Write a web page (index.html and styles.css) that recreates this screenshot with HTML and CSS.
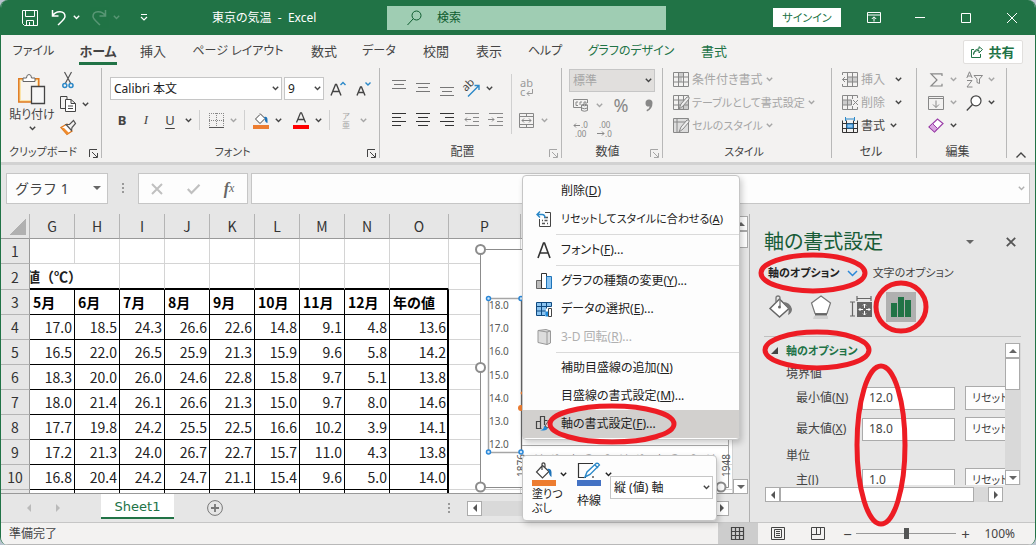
FILE: index.html
```
<!DOCTYPE html>
<html lang="ja">
<head>
<meta charset="utf-8">
<title>東京の気温 - Excel</title>
<link rel="stylesheet" href="styles.css">
</head>
<body>
<svg class="defs" aria-hidden="true">
  <symbol id="chev" viewBox="0 0 7 5"><path d="M.8 .8 3.500 3.500 6.200 .8" fill="none" stroke="currentColor" stroke-width="1.400"/></symbol>
  <symbol id="launch" viewBox="0 0 9 9"><path d="M.5 8V.5H8M3 3l5 5M8.500 4v4.500H4" fill="none" stroke="currentColor"/></symbol>
  <symbol id="grid" viewBox="0 0 16 16"><path d="M.5 .5h15v14H.5zM.5 5h15M.5 10h15M5.500 .5v14M10.500 .5v14" fill="none" stroke="currentColor"/></symbol>
  <symbol id="bucket" viewBox="0 0 20 17"><path d="M8 4 2.500 10l6 6 6.500-6.500L8 3M8 8V2.500Q8 .8 9.500 .8T11 3v3" fill="#fff" stroke="#444" stroke-width="1.200"/><path d="M13 7q4-1 4.500 3v5q-3-2-2.500-6z" fill="#1e73b8"/></symbol>
</svg>

<div class="window">
<header class="titlebar">
  <div class="quick">
    <button aria-label="上書き保存"><svg width="16" height="16" viewBox="0 0 16 16"><path d="M.5 .5h15v15h-13l-2-2zM3.500 .5v6h9v-6M4.500 15.500v-5h7v5M7.500 12v3" fill="none" stroke="#fff"/></svg></button>
    <button aria-label="元に戻す"><svg width="16" height="17" viewBox="0 0 16 17"><path d="M1.500 1v6h6M1.500 7C5 1 14 1.500 14 7.500 14 10 10 13 7 16" fill="none" stroke="#fff" stroke-width="1.500"/></svg></button>
    <button class="drop" aria-label="元に戻すの一覧"><svg class="chev"><use href="#chev"/></svg></button>
    <button class="faded" aria-label="やり直し"><svg width="16" height="17" viewBox="0 0 16 17"><path d="M14.500 1v6h-6M14.500 7C11 1 2 1.500 2 7.500 2 10 6 13 9 16" fill="none" stroke="#fff" stroke-width="1.500"/></svg></button>
    <button class="drop faded" aria-label="やり直しの一覧"><svg class="chev"><use href="#chev"/></svg></button>
    <button class="drop custom" aria-label="カスタマイズ"><svg width="8" height="8" viewBox="0 0 8 8"><path d="M1 .5h6M1 3l3 3 3-3" fill="none" stroke="#fff" stroke-width="1.200"/></svg></button>
  </div>
  <h1>東京の気温 &nbsp;-&nbsp; Excel</h1>
  <label class="search"><svg width="16" height="16" viewBox="0 0 16 16"><circle cx="9.500" cy="5.500" r="4.500" fill="none" stroke="#0e5c2f"/><path d="M6.300 8.700 .5 15" stroke="#0e5c2f"/></svg><input type="text" placeholder="検索" aria-label="検索"></label>
  <div class="wincontrols">
    <button class="signin">サインイン</button>
    <button aria-label="リボンの表示オプション"><svg width="14" height="11" viewBox="0 0 14 11"><path d="M.5 .5h13v10H.5zM.5 3h13M7 9.500V5M4.800 7 7 4.800 9.200 7" fill="none" stroke="#fff"/></svg></button>
    <button aria-label="最小化"><svg width="10" height="10" viewBox="0 0 10 10"><path d="M0 4.500h10" stroke="#fff"/></svg></button>
    <button aria-label="最大化"><svg width="10" height="10" viewBox="0 0 10 10"><path d="M.5 .5h9v9h-9z" fill="none" stroke="#fff"/></svg></button>
    <button aria-label="閉じる"><svg width="10" height="10" viewBox="0 0 10 10"><path d="M0 0l10 10M10 0 0 10" stroke="#fff"/></svg></button>
  </div>
</header>

<nav class="tabs">
  <a href="#" class="kana">ファイル</a><a href="#" class="active">ホーム</a><a href="#">挿入</a><a href="#" class="kana">ページ レイアウト</a><a href="#">数式</a><a href="#" class="kana">データ</a><a href="#">校閲</a><a href="#">表示</a><a href="#" class="kana">ヘルプ</a><a href="#" class="tool kana">グラフのデザイン</a><a href="#" class="tool">書式</a>
  <button class="share"><svg width="12" height="12" viewBox="0 0 12 12"><path d="M3 3.500H.5v8h9V8M2.500 8.500Q3 4.500 8 4.500V7l3.500-3.500L8 .7V3Q3 3 2.500 8.500" fill="none" stroke="#217346"/></svg>共有</button>
</nav>

<section class="ribbon">
  <div class="group">
    <div class="clip">
      <button class="paste">
        <svg width="28" height="30" viewBox="0 0 28 30"><path d="M.8 4.800h20V28H.8z" fill="#fbe3a8" stroke="#e07a1f" stroke-width="1.500"/><path d="M3 7h16v19H3z" fill="#f8f5f0"/><path d="M5 7.500V4h3.500q0-3.500 2.500-3.500T13.500 4H17v3.500z" fill="#fff" stroke="#666"/><path d="M13.500 12.500h13v17h-13z" fill="#f6f6f6" stroke="#444" stroke-width="1.300"/></svg>
        <span>貼り付け</span>
        <svg class="chev"><use href="#chev"/></svg>
      </button>
      <div class="clipcol">
        <div class="row"><button aria-label="切り取り"><svg width="12" height="17" viewBox="0 0 12 17"><path d="M2.500 0 8.500 11M9.500 0 3.500 11" stroke="#555" stroke-width="1.200"/><circle cx="2.800" cy="13.500" r="2" fill="none" stroke="#2b88c8" stroke-width="1.500"/><circle cx="9" cy="13.500" r="2" fill="none" stroke="#2b88c8" stroke-width="1.500"/></svg></button></div>
        <div class="row"><button aria-label="コピー"><svg width="16" height="16" viewBox="0 0 16 16"><path d="M5 12.500H.5V.5H7V3" fill="none" stroke="#444"/><path d="M5.500 3.500H11l4.500 4v8h-10zM11 3.500v4h4.500M8 10h5M8 12.500h5" fill="#fff" stroke="#444"/></svg></button><button class="drop" aria-label="コピーの一覧"><svg class="chev"><use href="#chev"/></svg></button></div>
        <div class="row"><button aria-label="書式のコピー"><svg width="16" height="16" viewBox="0 0 16 16"><path d="M1 7.500 7 14.500l5-3.500L7 4z" fill="#fff" stroke="#e07a1f" stroke-width="1.300"/><path d="M1 7.500 7 14.500l2-1.500-5-5z" fill="#f08c2e"/><path d="M6 4.500 11.500 10.500 12 7.500l3.500-4-2-3L9.500 4.500z" fill="#f3f2f1" stroke="#555" stroke-width="1.200"/></svg></button></div>
      </div>
    </div>
    <footer class="kana">クリップボード<button class="launch" aria-label="クリップボードの設定"><svg><use href="#launch"/></svg></button></footer>
  </div>

  <div class="group font">
    <div class="row fontpick">
      <select class="face" aria-label="フォント"><option>Calibri 本文</option></select>
      <select class="size" aria-label="フォント サイズ"><option>9</option></select>
      <button class="grow" aria-label="拡大"><svg width="16" height="16" viewBox="0 0 16 16"><path d="M1 14.500 5.500 3.500h1L11 14.500M2.800 10.500h6.500" fill="none" stroke="#444" stroke-width="1.400"/><path d="M10.500 4 13 1.500 15.500 4" fill="none" stroke="#2b88c8" stroke-width="1.400"/></svg></button>
      <button class="grow" aria-label="縮小"><svg width="16" height="16" viewBox="0 0 16 16"><path d="M2 14.500 5.500 6h1L10 14.500M3.500 11.500h5" fill="none" stroke="#444" stroke-width="1.400"/><path d="M10.500 1.500 13 4l2.500-2.500" fill="none" stroke="#2b88c8" stroke-width="1.400"/></svg></button>
    </div>
    <div class="row fontstyle">
      <button class="bold">B</button><button class="italic">I</button><button class="under">U</button><button class="drop" aria-label="下線の一覧"><svg class="chev"><use href="#chev"/></svg></button>
      <i class="sep"></i>
      <button class="off" aria-label="罫線"><svg width="15" height="15" viewBox="0 0 15 15"><path d="M.5 0v14M7.500 0v14M14.500 0v14M0 .5h15M0 7.500h15" fill="none" stroke="#888" stroke-dasharray="1 1"/><path d="M0 14.500h15" stroke="#555"/></svg></button><button class="drop off" aria-label="罫線の一覧"><svg class="chev"><use href="#chev"/></svg></button>
      <i class="sep"></i>
      <button aria-label="塗りつぶしの色"><svg width="16" height="17" viewBox="0 0 16 17"><path d="M7 2.500 2.500 7 7 11.500l5-5L7 1.500" fill="#fff" stroke="#444"/><path d="M11 5q3.500-1 3.500 3v3q-3-1-2.500-4z" fill="#1e73b8"/><path d="M0 13h16v4H0z" fill="#ed7d31"/></svg></button><button class="drop" aria-label="塗りつぶしの一覧"><svg class="chev"><use href="#chev"/></svg></button>
      <button class="fontcolor" aria-label="フォントの色"><svg width="16" height="17" viewBox="0 0 16 17"><path d="M3.500 10.500 7.500 .8h1l4 9.700M5 7.500h6" fill="none" stroke="#444" stroke-width="1.300"/><path d="M0 13h16v4H0z" fill="#f00"/></svg></button><button class="drop" aria-label="フォントの色の一覧"><svg class="chev"><use href="#chev"/></svg></button>
      <i class="sep"></i>
      <button class="ruby off"><span>ア</span><span>亜</span></button><button class="drop off" aria-label="ふりがなの一覧"><svg class="chev"><use href="#chev"/></svg></button>
    </div>
    <footer class="kana">フォント<button class="launch" aria-label="フォントの設定"><svg><use href="#launch"/></svg></button></footer>
  </div>

  <div class="group align">
    <div class="alignbody">
      <div class="alignleft">
        <div class="row">
          <button class="off" aria-label="上揃え"><svg width="14" height="18" viewBox="0 0 14 18"><path d="M0 1.500h14M2 5.500h10M0 9.500h14" stroke="#777"/></svg></button>
          <button class="off" aria-label="上下中央揃え"><svg width="14" height="18" viewBox="0 0 14 18"><path d="M0 4.500h14M2 8.500h10M0 12.500h14" stroke="#777"/></svg></button>
          <button class="off" aria-label="下揃え"><svg width="14" height="18" viewBox="0 0 14 18"><path d="M0 8.500h14M2 12.500h10M0 16.500h14" stroke="#777"/></svg></button>
          <button aria-label="方向"><svg width="17" height="17" viewBox="0 0 17 17"><text transform="translate(3 12) rotate(-45)" font-size="11" fill="#444">ab</text><path d="M5 16.500 16 5.500M11.500 5.500h4.500v4.500" fill="none" stroke="#2b88c8" stroke-width="1.400"/></svg></button><button class="drop" aria-label="方向の一覧"><svg class="chev"><use href="#chev"/></svg></button>
        </div>
        <div class="row">
          <button aria-label="左揃え"><svg width="14" height="14" viewBox="0 0 14 14"><path d="M0 .5h14M0 4.500h9M0 8.500h14M0 12.500h9" stroke="#333"/></svg></button>
          <button aria-label="中央揃え"><svg width="14" height="14" viewBox="0 0 14 14"><path d="M0 .5h14M2 4.500h10M0 8.500h14M2 12.500h10" stroke="#333"/></svg></button>
          <button aria-label="右揃え"><svg width="14" height="14" viewBox="0 0 14 14"><path d="M0 .5h14M5 4.500h9M0 8.500h14M5 12.500h9" stroke="#333"/></svg></button>
          <button class="off" aria-label="インデントを減らす"><svg width="15" height="14" viewBox="0 0 15 14"><path d="M1 .5h14M9 4.500h6M9 8.500h6M1 12.500h14M7 6.500H1M3 4.500l-2 2 2 2" fill="none" stroke="#888"/></svg></button>
          <button class="off" aria-label="インデントを増やす"><svg width="15" height="14" viewBox="0 0 15 14"><path d="M1 .5h14M9 4.500h6M9 8.500h6M1 12.500h14M0 6.500h6M4 4.500l2 2-2 2" fill="none" stroke="#888"/></svg></button>
        </div>
      </div>
      <i class="sep"></i>
      <div class="alignright">
        <div class="row"><button class="off" aria-label="折り返して全体を表示する"><svg width="14" height="18" viewBox="0 0 14 18"><text x="1" y="8" font-size="11" fill="#999">ab</text><text x="1" y="17" font-size="11" fill="#999">c</text><path d="M13.500 10v4.500H8M10.500 12 8 14.500l2.500 2.500" fill="none" stroke="#999"/></svg></button></div>
        <div class="row"><button class="off" aria-label="セルを結合して中央揃え"><svg width="15" height="15" viewBox="0 0 15 15"><path d="M.5 .5h14v14H.5zM.5 3.500h14M.5 11.500h14M7.500 .5v3M7.500 11.500v3M3 7.500h9M5 5.500l-2 2 2 2M10 5.500l2 2-2 2" fill="none" stroke="#888"/></svg></button><button class="drop off" aria-label="結合の一覧"><svg class="chev"><use href="#chev"/></svg></button></div>
      </div>
    </div>
    <footer>配置<button class="launch off" aria-label="配置の設定"><svg><use href="#launch"/></svg></button></footer>
  </div>

  <div class="group number">
    <select class="format" aria-label="表示形式" disabled><option>標準</option></select>
    <div class="row">
      <button class="off" aria-label="通貨"><svg width="16" height="14" viewBox="0 0 16 14"><path d="M8 9.500H.5v-8h14V5M5 4H3v3.500h2M7 7V4h2M11 7V4h2v2" fill="none" stroke="#888"/><path d="M8.500 7v5.500q3 1.500 6 0V7q-3-1.500-6 0q3 1.500 6 0M8.500 10q3 1.500 6 0" fill="#eee" stroke="#888"/></svg></button><button class="drop off" aria-label="通貨の一覧"><svg class="chev"><use href="#chev"/></svg></button><button class="percent off">%</button><button class="comma off" aria-label="桁区切り"><svg width="8" height="13" viewBox="0 0 8 13"><path d="M7.500 4Q7.500 10 2 12.500L1.500 11Q4.500 9.500 4.700 7.500 .5 8 .5 4.200 .5 .5 4 .5T7.500 4z" fill="#888"/></svg></button>
    </div>
    <div class="row">
      <button class="off" aria-label="小数点以下を増やす"><svg width="16" height="16" viewBox="0 0 16 16"><text x="8" y="7" font-size="8" fill="#888">.0</text><text x="2" y="16" font-size="8" fill="#888">.00</text><path d="M7 4.500H1M3 2.500l-2 2 2 2" fill="none" stroke="#888"/></svg></button><button class="off" aria-label="小数点以下を減らす"><svg width="16" height="16" viewBox="0 0 16 16"><text x="2" y="7" font-size="8" fill="#888">.00</text><text x="8" y="16" font-size="8" fill="#888">.0</text><path d="M0 12.500h7M5 10.500l2 2-2 2" fill="none" stroke="#888"/></svg></button>
    </div>
    <footer>数値<button class="launch off" aria-label="数値の設定"><svg><use href="#launch"/></svg></button></footer>
  </div>

  <div class="group list">
    <button class="off"><svg width="16" height="15" viewBox="0 0 16 15"><path d="M5 0h6v5H5zM5 5h4v5H5z" fill="#ccc"/><use href="#grid" width="16" height="16" color="#888"/></svg>条件付き書式<svg class="chev"><use href="#chev"/></svg></button>
    <button class="off kana"><svg width="16" height="15" viewBox="0 0 16 15"><path d="M5 5h10v9H5z" fill="#ccc"/><use href="#grid" width="16" height="16" color="#888"/><path d="m6 14 2-5 6-7h2v2l-6 7z" fill="#eee" stroke="#888"/></svg>テーブルとして書式設定<svg class="chev"><use href="#chev"/></svg></button>
    <button class="off kana"><svg width="16" height="15" viewBox="0 0 16 15"><path d="M.5 .5h15v14H.5zM.5 4h15M4 .5v14" fill="#ddd" stroke="#888"/><path d="m6 14 2-5 6-7h2v2l-6 7z" fill="#eee" stroke="#888"/></svg>セルのスタイル<svg class="chev"><use href="#chev"/></svg></button>
    <footer class="kana">スタイル</footer>
  </div>

  <div class="group list cells">
    <div class="row"><button class="off"><svg width="16" height="15" viewBox="0 0 16 15"><path d="M5.500 5h10v5h-10z" fill="#ccc"/><path d="M.5 3V.5h15v14H.5V12M5.500 5h10v5h-10zM10.500 .5v14M5.500 .5V5M5.500 10v4.500M6 7.500H.5M3 5 .5 7.500 3 10" fill="none" stroke="#888"/></svg>挿入</button><button class="drop" aria-label="挿入の一覧"><svg class="chev"><use href="#chev"/></svg></button></div>
    <div class="row"><button class="off"><svg width="16" height="15" viewBox="0 0 16 15"><path d="M.5 5h9v5h-9z" fill="#ccc"/><path d="M.5 5V.5h15V3M.5 5h9v5h-9zM.5 10v4.500h15V12M5.500 .5v14M10.500 .5V4M10.500 11v3.500M11 5l5 5M16 5l-5 5" fill="none" stroke="#888"/></svg>削除</button><button class="drop" aria-label="削除の一覧"><svg class="chev"><use href="#chev"/></svg></button></div>
    <div class="row"><button><svg width="16" height="17" viewBox="0 0 16 17"><path d="M.5 3.500v12h15v-12M.5 6.500h15M.5 11.500h15M4.500 3.500v12M11.500 3.500v12" fill="none" stroke="#333"/><path d="M5 7h6v4H5z" fill="#8cc4f0" stroke="#2080c8"/><path d="M3.500 0v4M12.500 0v4M3.500 2h9" stroke="#2b88c8"/></svg>書式</button><button class="drop" aria-label="書式の一覧"><svg class="chev"><use href="#chev"/></svg></button></div>
    <footer>セル</footer>
  </div>

  <div class="group edit">
    <div class="row"><button class="off" aria-label="合計"><svg width="13" height="14" viewBox="0 0 13 14"><path d="M12 3V.8H1L7 7l-6 6h11v-2.200" fill="none" stroke="#888" stroke-width="1.200"/></svg></button><button class="drop off" aria-label="合計の一覧"><svg class="chev"><use href="#chev"/></svg></button><button class="off sort" aria-label="並べ替えとフィルター"><svg width="17" height="17" viewBox="0 0 17 17"><path d="M.8 7 3.500 .8 6.200 7M1.800 5h3.500M1 9.500h5L1 16h5.500M8 4.500h8.500L13.500 8v4.500l-2.500-1V8z" fill="none" stroke="#888"/></svg></button><button class="drop off" aria-label="並べ替えの一覧"><svg class="chev"><use href="#chev"/></svg></button></div>
    <div class="row"><button class="off" aria-label="フィル"><svg width="16" height="14" viewBox="0 0 16 14"><path d="M.5 .5h15v13H.5zM.5 2.500h15M8 4.500v7M5 8.500l3 3 3-3" fill="none" stroke="#888"/></svg></button><button class="drop off" aria-label="フィルの一覧"><svg class="chev"><use href="#chev"/></svg></button><button class="sort" aria-label="検索と選択"><svg width="16" height="16" viewBox="0 0 16 16"><circle cx="10" cy="5.800" r="5" fill="#fff" stroke="#444" stroke-width="1.200"/><path d="M6.500 9.500 .8 15.500" stroke="#444" stroke-width="1.300"/></svg></button><button class="drop" aria-label="検索の一覧"><svg class="chev"><use href="#chev"/></svg></button></div>
    <div class="row"><button aria-label="クリア"><svg width="16" height="15" viewBox="0 0 16 15"><path d="M1 9 9.500 1 15 5.500 6.500 14z" fill="#fff" stroke="#9b3fa8" stroke-width="1.200"/><path d="M1 9 4.500 5.500l5 5L6.500 14z" fill="#d9a5e0" stroke="#9b3fa8"/></svg></button><button class="drop" aria-label="クリアの一覧"><svg class="chev"><use href="#chev"/></svg></button></div>
    <footer>編集</footer>
  </div>
  <button class="collapse" aria-label="リボンを折りたたむ"><svg width="10" height="6" viewBox="0 0 10 6"><path d="M.5 5.500 5 1l4.500 4.500" fill="none" stroke="#444" stroke-width="1.400"/></svg></button>
</section>

<div class="formulabar">
  <select class="namebox" aria-label="名前ボックス"><option>グラフ 1</option></select>
  <span class="dots"></span>
  <div class="fx">
    <button aria-label="キャンセル"><svg width="12" height="10" viewBox="0 0 12 10"><path d="M1 0l10 10M11 0 1 10" stroke="#c0c0c0" stroke-width="2"/></svg></button>
    <button aria-label="入力"><svg width="13" height="10" viewBox="0 0 13 10"><path d="M.8 5 4.500 9 12.500 .8" fill="none" stroke="#c0c0c0" stroke-width="2.200"/></svg></button>
    <button class="fn"><b>f</b>x</button>
  </div>
  <div class="formula"><input type="text" aria-label="数式バー"><svg class="chev"><use href="#chev"/></svg></div>
</div>

<main>
  <div class="sheet">
    <div class="gridwrap">
      <div class="grid">
        <table>
          <colgroup><col class="rowhead"><col span="8" class="month"><col class="year"><col class="wide"><col></colgroup>
          <thead><tr><th class="corner"></th><th>G</th><th>H</th><th>I</th><th>J</th><th>K</th><th>L</th><th>M</th><th>N</th><th>O</th><th>P</th><th></th></tr></thead>
          <tbody>
            <tr><th>1</th><td></td><td></td><td></td><td></td><td></td><td></td><td></td><td></td><td></td><td></td><td></td></tr>
            <tr class="unit"><th>2</th><td colspan="2" class="spill">値（℃）</td><td></td><td></td><td></td><td></td><td></td><td></td><td></td><td></td><td></td></tr>
            <tr class="data months"><th>3</th><td>5月</td><td>6月</td><td>7月</td><td>8月</td><td>9月</td><td>10月</td><td>11月</td><td>12月</td><td>年の値</td><td></td><td></td></tr>
            <tr class="data"><th>4</th><td>17.0</td><td>18.5</td><td>24.3</td><td>26.6</td><td>22.6</td><td>14.8</td><td>9.1</td><td>4.8</td><td>13.6</td><td></td><td></td></tr>
            <tr class="data"><th>5</th><td>16.5</td><td>22.0</td><td>26.5</td><td>25.9</td><td>21.3</td><td>15.9</td><td>9.6</td><td>5.8</td><td>14.2</td><td></td><td></td></tr>
            <tr class="data"><th>6</th><td>18.3</td><td>20.0</td><td>26.0</td><td>24.6</td><td>22.8</td><td>15.8</td><td>9.7</td><td>5.1</td><td>13.8</td><td></td><td></td></tr>
            <tr class="data"><th>7</th><td>18.0</td><td>21.4</td><td>26.1</td><td>26.6</td><td>21.3</td><td>15.0</td><td>9.7</td><td>8.0</td><td>14.6</td><td></td><td></td></tr>
            <tr class="data"><th>8</th><td>17.7</td><td>19.8</td><td>24.2</td><td>25.5</td><td>22.5</td><td>16.6</td><td>10.2</td><td>3.9</td><td>14.1</td><td></td><td></td></tr>
            <tr class="data"><th>9</th><td>17.2</td><td>21.3</td><td>24.0</td><td>26.7</td><td>22.7</td><td>15.7</td><td>11.0</td><td>4.3</td><td>13.8</td><td></td><td></td></tr>
            <tr class="data"><th>10</th><td>16.8</td><td>20.4</td><td>24.2</td><td>24.7</td><td>21.1</td><td>15.4</td><td>9.6</td><td>5.0</td><td>14.0</td><td></td><td></td></tr>
            <tr class="data"><th></th><td></td><td></td><td></td><td></td><td></td><td></td><td></td><td></td><td></td><td></td><td></td></tr>
          </tbody>
        </table>
        <svg class="chart" width="258" height="254" viewBox="0 0 258 254">
          <path d="M6.500 7.500h248v238H6.500z" fill="#fff" stroke="#8c8c8c"/>
          <path d="M48 203.500h206.500M254.500 180v34" fill="none" stroke="#aaa"/>
          <path d="M14.500 56.500h33v154h-33z" fill="none" stroke="#a6a6a6" stroke-width="1.500"/>
          <path d="M47.500 56.500v154" stroke="#666"/>
          <g fill="#595959" font-size="10">
            <text x="15" y="67">18.0</text><text x="15" y="90">17.0</text><text x="15" y="113">16.0</text><text x="15" y="137">15.0</text><text x="15" y="160">14.0</text><text x="15" y="183">13.0</text><text x="15" y="206">12.0</text>
            <g text-anchor="end">
              <text transform="translate(51 212) rotate(-90)">1876</text><text transform="translate(68 212) rotate(-90)">1882</text><text transform="translate(85 212) rotate(-90)">1888</text><text transform="translate(102 212) rotate(-90)">1894</text><text transform="translate(119 212) rotate(-90)">1900</text><text transform="translate(136 212) rotate(-90)">1906</text><text transform="translate(153 212) rotate(-90)">1912</text><text transform="translate(170 212) rotate(-90)">1918</text><text transform="translate(188 212) rotate(-90)">1924</text><text transform="translate(205 212) rotate(-90)">1930</text><text transform="translate(222 212) rotate(-90)">1936</text><text transform="translate(240 212) rotate(-90)">1942</text><text transform="translate(256 212) rotate(-90)">1948</text>
            </g>
          </g>
          <circle cx="47" cy="166" r="3" fill="#ed7d31"/><circle cx="48" cy="151" r="1.500" fill="#ed7d31"/>
          <g fill="#cfe5f8" stroke="#2b88d8" stroke-width="1.500"><circle cx="14.500" cy="56.500" r="2"/><circle cx="47" cy="56.500" r="2"/><circle cx="14.500" cy="210" r="2"/><circle cx="47" cy="210" r="2"/></g>
          <g fill="#fff" stroke="#8c8c8c" stroke-width="2"><circle cx="6.500" cy="7.500" r="4.500"/><circle cx="6.500" cy="125.500" r="4.500"/><circle cx="6.500" cy="245" r="4.500"/><circle cx="247" cy="245" r="4.500"/></g>
        </svg>
      </div>
      <div class="vscroll"><button class="up" aria-label="上へ"></button><div class="thumb"></div><button class="down" aria-label="下へ"></button></div>
    </div>
    <div class="sheetbar">
      <button class="prev" aria-label="前のシート"></button><button class="next" aria-label="次のシート"></button>
      <a href="#" class="sheettab">Sheet1</a>
      <button class="addsheet" aria-label="新しいシート"><svg width="16" height="16" viewBox="0 0 16 16"><circle cx="8" cy="8" r="7.400" fill="none" stroke="#777"/><path d="M8 4v8M4 8h8" stroke="#777" stroke-width="1.800"/></svg></button>
      <span class="dots"></span>
      <div class="hscroll"><button class="left" aria-label="左へ"></button><button class="right" aria-label="右へ"></button></div>
    </div>
  </div>

  <aside class="pane">
    <div class="panehead"><h2>軸の書式設定</h2><button class="panemenu" aria-label="作業ウィンドウ オプション"></button><button aria-label="閉じる"><svg width="10" height="10" viewBox="0 0 10 10"><path d="M.8 .8l8.400 8.400M9.200 .8.800 9.200" stroke="#555" stroke-width="1.800"/></svg></button></div>
    <div class="panetabs kana"><button class="active">軸のオプション<svg width="11" height="7" viewBox="0 0 11 7"><path d="M1 1l4.500 4.500L10 1" fill="none" stroke="#2b88d8" stroke-width="1.500"/></svg></button><button>文字のオプション</button></div>
    <div class="paneicons">
      <button aria-label="塗りつぶしと線"><svg width="24" height="24" viewBox="0 0 24 24"><path d="M1 13.500 10.500 4 20 13.500 10.500 22z" fill="#fff" stroke="#666" stroke-width="1.500"/><path d="M7 8V3Q7 1 9 1t2 2v8" fill="none" stroke="#777" stroke-width="1.300"/><circle cx="10.500" cy="12" r="1.500" fill="#666"/><path d="M14 7q7 0 9 7 0 4-4 6 2-6-2-9z" fill="#777"/></svg></button>
      <button aria-label="効果"><svg width="22" height="24" viewBox="0 0 22 24"><path d="M11 1 20.500 8 17 18.500H5L1.500 8z" fill="#fff" stroke="#777" stroke-width="1.200"/><path d="M5 18.500h12v2H5z" fill="#666"/><path d="M4 21h14v3H3z" fill="#d0d0d0"/></svg></button>
      <button aria-label="サイズとプロパティ"><svg width="22" height="24" viewBox="0 0 22 24"><path d="M7 3.500h14M7 1v5M21 1v5M2.500 7v14M0 7h5M0 21h5" stroke="#666" stroke-width="1.200"/><path d="M7 7h15v15H7z" fill="#666"/><path d="M14.500 9v4M14.500 16v4M9 14.500h4M16 14.500h4M13 10.500 14.500 9l1.500 1.500M13 18.500l1.500 1.500 1.500-1.500M10.500 13 9 14.500l1.500 1.500M18.500 13l1.500 1.500-1.500 1.500" fill="none" stroke="#fff"/></svg></button>
      <button class="active" aria-label="軸のオプション"><svg width="20" height="22" viewBox="0 0 20 22"><path d="M0 7h6v14H0zM7 1h6v20H7zM14 4h6v17h-6z" fill="#217346"/></svg></button>
    </div>
    <div class="panebody">
      <div class="fields">
        <h3 class="kana">軸のオプション</h3>
        <p>境界値</p>
        <div class="field"><label for="min">最小値(<u>N</u>)</label><input id="min" type="text" value="12.0"><button class="kana">リセット</button></div>
        <div class="field"><label for="max">最大値(<u>X</u>)</label><input id="max" type="text" value="18.0"><button class="kana">リセット</button></div>
        <p>単位</p>
        <div class="field"><label for="major">主(<u>J</u>)</label><input id="major" type="text" value="1.0"><button class="kana">リセット</button></div>
      </div>
      <div class="vscroll"><button class="up" aria-label="上へ"></button><div class="thumb"></div><button class="down" aria-label="下へ"></button></div>
    </div>
    <div class="hscroll"><button class="left" aria-label="左へ"></button><div class="thumb"></div><button class="right" aria-label="右へ"></button></div>
    <svg class="marks" width="200" height="290" viewBox="0 0 200 290"><g fill="none" stroke="#ed1c24" stroke-width="5"><ellipse cx="63" cy="34" rx="52" ry="18"/><ellipse cx="151" cy="68" rx="25" ry="24"/><ellipse cx="67" cy="111" rx="52" ry="18"/><ellipse cx="131" cy="206" rx="24" ry="79"/></g></svg>
  </aside>
</main>

<footer class="status">
  <span>準備完了</span>
  <button class="view active" aria-label="標準"><svg width="14" height="14" viewBox="0 0 14 14"><path d="M.5 .5h12v12H.5zM.5 4.500h12M.5 8.500h12M4.500 .5v12M8.500 .5v12" fill="none" stroke="#444" stroke-width="1.200"/></svg></button>
  <button class="view" aria-label="ページ レイアウト"><svg width="14" height="13" viewBox="0 0 14 13"><path d="M.5 .5h13v12H.5zM3.500 2.500h7v8h-7zM5 4.500h4M5 6.500h4M5 8.500h4" fill="none" stroke="#444"/></svg></button>
  <button class="view" aria-label="改ページ プレビュー"><svg width="14" height="13" viewBox="0 0 14 13"><path d="M.5 .5h13v12H.5zM5.500 .5v7M9.500 .5v7M.5 7.500h9" fill="none" stroke="#444"/></svg></button>
  <button class="zoombtn">−</button><input type="range" min="10" max="190" value="100" aria-label="ズーム"><button class="zoombtn">+</button>
  <output>100%</output>
</footer>
</div>

<div class="contextmenu" role="menu">
  <button role="menuitem"><i></i>削除(<u>D</u>)</button>
  <button role="menuitem" class="kana"><i><svg width="14" height="17" viewBox="0 0 14 17"><path d="M8 1.500h5.500v14h-11V8" fill="none" stroke="#444"/><path d="M7 6.500h4M5 9.500h1M7.500 9.500h3M5 12.500h3M10 12.500h1" stroke="#555" stroke-width="1.500"/><path d="M0 3.500h5q3 0 3 3.500M3 .5 0 3.500l3 3" fill="none" stroke="#2b88c8" stroke-width="1.400"/></svg></i>リセットしてスタイルに合わせる(<u>A</u>)</button>
  <hr>
  <button role="menuitem"><i><svg width="14" height="17" viewBox="0 0 14 17"><path d="M1 16 6.500 1h1L13 16M3 11h8" fill="none" stroke="#333" stroke-width="1.600"/></svg></i>フォント(<u>F</u>)...</button>
  <hr>
  <button role="menuitem"><i><svg width="16" height="16" viewBox="0 0 16 16"><path d="M.5 7.500h5v8h-5z" fill="#bbb" stroke="#666"/><path d="M5.500 .5h5v15h-5z" fill="#fff" stroke="#333"/><path d="M10.500 3.500h5v12h-5z" fill="#8cc4f0" stroke="#1e73b8"/></svg></i>グラフの種類の変更(<u>Y</u>)...</button>
  <button role="menuitem"><i><svg width="16" height="15" viewBox="0 0 16 15"><path d="M.5 .5h15v4H10v9H.5z" fill="#8cc4f0"/><path d="M.5 .5h15v4M.5 .5v13H9M.5 4.500h15M.5 9h9M5.500 .5v13M10.500 .5v6" fill="none" stroke="#104a80"/><path d="M9.500 9.500h3v5h-3z" fill="#1e88d8"/><path d="M12.500 6.500h3v8h-3z" fill="#fff" stroke="#444"/></svg></i>データの選択(<u>E</u>)...</button>
  <button role="menuitem" disabled><i><svg width="14" height="16" viewBox="0 0 14 16"><path d="M1 1.500 9 .5l4.500 1.500v12L10 15.500 1 13.500z" fill="#ddd" stroke="#999"/><path d="M1 1.500 10 3v12.500M10 3l3.500-1" fill="none" stroke="#999"/></svg></i>3-D 回転(<u>R</u>)...</button>
  <hr>
  <button role="menuitem"><i></i>補助目盛線の追加(<u>N</u>)</button>
  <button role="menuitem"><i></i>目盛線の書式設定(<u>M</u>)...</button>
  <button role="menuitem" class="hot"><i><svg width="16" height="16" viewBox="0 0 16 16"><path d="M5.500 12.500h-5v-7h4M4.500 12V.5h4V9M8.500 4.500h3" fill="none" stroke="#444" stroke-width="1.200"/><path d="M4 14q4 0 4-4l4 1q-1 5-8 3z" fill="#1e88d8"/><path d="m9 10 4-6 2 2-3 6z" fill="#ddd" stroke="#555"/></svg></i>軸の書式設定(<u>F</u>)...</button>
  <svg class="mark" width="132" height="44" viewBox="0 0 132 44"><ellipse cx="66" cy="22" rx="62" ry="18" fill="none" stroke="#ed1c24" stroke-width="5"/></svg>
</div>

<div class="minibar">
  <button class="minibtn"><span><svg width="24" height="24" viewBox="0 0 24 24"><use href="#bucket" x="2" width="20" height="17"/><path d="M0 18h24v6H0z" fill="#ed7d31"/></svg><svg class="chev"><use href="#chev"/></svg></span>塗りつ<br>ぶし</button>
  <button class="minibtn"><span><svg width="24" height="24" viewBox="0 0 24 24"><path d="M16 1.500H1.500v14H9M16 14v2" fill="none" stroke="#333" stroke-width="1.200"/><path d="m8 15 2-5 9-8.500q2-1 3.500 1.500l-9.500 9.500zM18 3l3 3" fill="#fff" stroke="#2b88c8" stroke-width="1.400"/><path d="M0 18h24v6H0z" fill="#4472c4"/></svg><svg class="chev"><use href="#chev"/></svg></span><em>枠線</em></button>
  <select aria-label="グラフ要素"><option>縦 (値) 軸</option></select>
</div>
</body>
</html>
```
FILE: styles.css
```
* {
  box-sizing: border-box;
}
body {
  margin: 0;
  height: 100vh;
  overflow: hidden;
  position: relative;
  background: #b9c4cf;
  color: #444;
  font: 12px/16px "Noto Sans", "Noto Sans CJK JP", sans-serif;
  font-feature-settings: "palt";
}
button, select, input {
  margin: 0;
  padding: 0;
  border: 0;
  background: none;
  color: inherit;
  font: inherit;
  font-feature-settings: inherit;
}
button {
  display: flex;
  align-items: center;
  justify-content: center;
  white-space: nowrap;
}
button:disabled {
  color: #b0b0b0;
}
a {
  color: inherit;
  text-decoration: none;
}
svg {
  display: block;
  flex: none;
  overflow: visible;
}
h1, h2, h3, p {
  margin: 0;
  font-size: 12px;
  font-weight: normal;
}
.defs {
  position: absolute;
  width: 0;
  height: 0;
}
.window {
  height: 100%;
  display: flex;
  flex-direction: column;
  border: 1px solid #217346;
  border-width: 0 1px;
  border-radius: 8px;
  overflow: hidden;
  background: #e6e6e6;
}
.chev {
  width: 7px;
  height: 5px;
}
.off {
  color: #a6a6a6;
}
.kana {
  font-size: 11px;
}
.row {
  display: flex;
  align-items: center;
}
.drop {
  width: 12px;
  height: 22px;
}
.faded {
  opacity: .25;
}

/* title bar */
.titlebar {
  flex: none;
  height: 35px;
  display: grid;
  grid-template-columns: 180px 206px 279px 1fr;
  align-items: center;
  background: #217346;
  color: #fff;
}
.quick {
  display: flex;
  align-items: center;
  padding-left: 18px;
}
.quick button {
  width: 22px;
}
.quick button + button {
  margin-left: 7px;
}
.quick .drop, .quick .drop + .drop {
  width: 12px;
  margin-left: 0;
}
.quick .drop + button {
  margin-left: 6px;
}
.quick .drop + .custom {
  margin-left: 16px;
}
.titlebar h1 {
  padding-left: 31px;
  white-space: nowrap;
}
.search {
  display: flex;
  align-items: center;
  gap: 14px;
  height: 24px;
  padding-left: 20px;
  background: #9fcdb3;
}
.search input {
  flex: 1;
}
.search input::placeholder {
  color: #0e5c2f;
  opacity: 1;
}
.wincontrols {
  display: flex;
  align-items: center;
  justify-content: flex-end;
}
.wincontrols button {
  width: 46px;
  height: 32px;
}
.wincontrols .signin {
  width: 68px;
  height: 19px;
  margin-right: 10px;
  background: #fff;
  color: #217346;
  font-size: 11px;
}

/* ribbon tabs */
.tabs {
  flex: none;
  height: 33px;
  display: grid;
  grid-template-columns: 65px 64px 46px 124px 48px 62px 52px 54px 58px 114px 52px 1fr;
  align-items: center;
  background: #f3f2f1;
  font-size: 13px;
  text-align: center;
  white-space: nowrap;
}
.tabs a {
  padding: 3px 0 4px;
}
.tabs .kana {
  font-size: 12px;
}
.tabs .active {
  justify-self: center;
  font-weight: bold;
  border-bottom: 3px solid #217346;
  padding: 0 0 3px;
  margin-top: 4px;
}
.tabs .tool {
  color: #217346;
}
.share {
  justify-self: end;
  width: 60px;
  height: 24px;
  margin-right: 12px;
  gap: 5px;
  background: #fff;
  border: 1px solid #e1dfdd;
  border-radius: 2px;
  color: #217346;
  font-weight: bold;
}

/* ribbon */
.ribbon {
  flex: none;
  height: 97px;
  display: grid;
  grid-template-columns: 101px 278px 182px 101px 169px 85px 90px 1fr;
  background: #f3f2f1;
  border-bottom: 3px solid #d2d2d2;
}
.group {
  position: relative;
  display: flex;
  flex-direction: column;
  margin: 0 0 4px;
  border-right: 1px solid #b8b8b8;
}
.group footer {
  margin-top: auto;
  height: 12px;
  line-height: 12px;
  text-align: center;
  padding-right: 16px;
}
.launch {
  position: absolute;
  right: 3px;
  bottom: 0;
}
.launch svg {
  width: 9px;
  height: 9px;
}
.clip {
  display: flex;
  padding-left: 5px;
}
.paste {
  width: 52px;
  height: 68px;
  flex-direction: column;
  gap: 3px;
}
.clipcol .row {
  height: 24px;
}
.clipcol button {
  width: 20px;
}
.clipcol .drop {
  width: 14px;
}
.font {
  padding: 0 8px;
}
.fontpick {
  padding-top: 9px;
  gap: 2px;
}
.font select, .minibar select {
  height: 23px;
  padding-left: 3px;
  border: 1px solid #c6c6c6;
  background-color: #fff;
  color: #222;
}
select {
  appearance: none;
  background: url("data:image/svg+xml,%3Csvg xmlns='http://www.w3.org/2000/svg' width='7' height='5'%3E%3Cpath d='M.8 .8 3.500 3.500 6.200 .8' fill='none' stroke='%23444' stroke-width='1.400'/%3E%3C/svg%3E") no-repeat right 2px center;
}
.font .face {
  flex: none;
  width: 172px;
}
.font .size {
  flex: none;
  width: 40px;
}
.grow {
  flex: none;
  width: 23px;
}
.fontstyle {
  height: 24px;
  margin-top: 8px;
}
.fontstyle button {
  width: 22px;
  height: 22px;
}
.fontstyle .bold, .fontstyle .italic, .fontstyle .under {
  width: 24px;
  font-size: 13px;
}
.fontstyle .drop {
  width: 12px;
}
.bold {
  font-weight: bold;
}
.italic {
  font-family: "Liberation Serif", serif;
  font-style: italic;
}
.under {
  text-decoration: underline;
  text-underline-offset: 3px;
}
.fontstyle .fontcolor {
  margin-left: 6px;
}
.fontstyle .ruby {
  flex-direction: column;
  font-size: 8px;
  line-height: 9px;
}
.sep {
  width: 1px;
  height: 20px;
  margin: 0 5px;
  background: #d0d0d0;
}
.alignbody {
  display: flex;
  padding: 6px 0 0 7px;
}
.alignbody .sep {
  height: 60px;
  margin: 0 2px;
}
.alignleft, .alignright {
  display: flex;
  flex-direction: column;
  gap: 4px;
}
.alignleft {
  width: 122px;
}
.alignbody button {
  width: 24px;
  height: 28px;
}
.alignbody .drop {
  width: 12px;
}
.number {
  padding-left: 7px;
}
.number .row {
  height: 24px;
}
.number .row button {
  width: 24px;
}
.number .row .drop {
  width: 12px;
}
.number .row .percent {
  width: 32px;
  font-size: 18px;
  color: #888;
}
.format {
  width: 86px;
  height: 23px;
  padding-left: 3px;
  margin: 1px 0;
  border: 1px solid #c6c6c6;
  background-color: #e1dfdd;
  color: #a6a6a6;
  opacity: 1;
}
.list {
  padding-left: 10px;
}
.list button {
  height: 23px;
  gap: 3px;
  justify-content: flex-start;
}
.cells .drop {
  width: 26px;
  justify-content: center;
}
.cells .row:nth-child(3) .drop {
  width: 16px;
}
.edit {
  padding-left: 8px;
}
.edit .row {
  height: 23px;
}
.edit .row button {
  width: 22px;
}
.edit .row .drop {
  width: 12px;
}
.edit .row .sort {
  margin-left: 4px;
}
.collapse {
  align-self: end;
  justify-self: center;
  margin-bottom: 4px;
}

/* formula bar */
.formulabar {
  flex: none;
  height: 49px;
  display: flex;
  align-items: flex-start;
  padding: 8px 5px 0;
}
.namebox, .fx, .formula {
  height: 31px;
  border: 1px solid #c6c6c6;
  background-color: #fdfdfd;
}
.namebox {
  width: 102px;
  padding-left: 8px;
  font-size: 14px;
  font-feature-settings: normal;
  background-image: url("data:image/svg+xml,%3Csvg xmlns='http://www.w3.org/2000/svg' width='8' height='5'%3E%3Cpath d='M0 0h8L4 4z' fill='%23666'/%3E%3C/svg%3E");
  background-position: right 6px center;
}
.dots {
  width: 2px;
  height: 10px;
  margin: 10px 14px;
  background: repeating-linear-gradient(#999 0 2px, transparent 2px 4px);
}
.fx {
  display: flex;
  width: 110px;
  margin-right: 3px;
}
.fx button {
  flex: 1;
}
.fx .fn {
  font: italic 12px "Liberation Serif", serif;
  color: #666;
}
.fn b {
  font-size: 16px;
}
.formula {
  flex: 1;
  display: flex;
  align-items: center;
  padding-right: 4px;
  color: #b0b0b0;
}
.formula input {
  flex: 1;
}

/* worksheet */
main {
  flex: 1;
  min-height: 0;
  display: flex;
}
.sheet {
  flex: 1;
  min-width: 0;
  display: flex;
  flex-direction: column;
}
.gridwrap {
  flex: 1;
  min-height: 0;
  display: flex;
}
.grid {
  flex: 1;
  min-width: 0;
  position: relative;
  overflow: hidden;
  border-bottom: 1px solid #999;
}
table {
  width: 100%;
  table-layout: fixed;
  border-collapse: separate;
  border-spacing: 0;
  background: #fff;
  font: 14px/20px "Noto Sans CJK JP", sans-serif;
  color: #222;
}
.rowhead {
  width: 29px;
}
.month {
  width: 45px;
}
.year {
  width: 59px;
}
.wide {
  width: 72px;
}
td, th {
  height: 25px;
  padding: 0;
  border-right: 1px solid #d4d4d4;
  border-bottom: 1px solid #d4d4d4;
  font-weight: normal;
  white-space: nowrap;
}
th {
  background: #e6e6e6;
  color: #333;
  border-color: #b4b4b4;
  border-right-color: #999;
}
thead th {
  border-color: #b4b4b4;
  border-bottom-color: #999;
}
.corner {
  background: linear-gradient(135deg, transparent 50%, #b0b0b0 50%) no-repeat 8px 4px / 17px 17px #e6e6e6;
}
.unit td {
  height: 26px;
  border-bottom: 2px solid #000;
  font-weight: bold;
}
.unit td:nth-last-child(-n+2) {
  border-bottom: 1px solid #d4d4d4;
}
.unit .spill {
  text-indent: -4px;
  overflow: hidden;
}
.data td {
  padding-right: 2px;
  text-align: right;
  border-color: #000;
}
.data td:nth-last-child(3) {
  border-right: 2px solid #000;
  padding-right: 1px;
}
.data td:nth-last-child(-n+2) {
  border-color: #d4d4d4;
}
.months td {
  padding-left: 3px;
  text-align: left;
  font-weight: bold;
  color: #000;
}
.chart {
  position: absolute;
  left: 473px;
  top: 28px;
}

/* scroll bars */
.vscroll {
  width: 16px;
  display: flex;
  flex-direction: column;
  background: #d9d9d9;
}
.vscroll .down {
  margin-top: auto;
}
.vscroll button, .hscroll button {
  flex: none;
  width: 15px;
  height: 15px;
  background: #fff;
  border: 1px solid #ababab;
}
.up::before, .down::before, .panemenu::before {
  content: "";
  border: 4px solid transparent;
  border-top: 0;
  border-bottom-color: #666;
}
.down::before, .panemenu::before {
  border-top: 4px solid #666;
  border-bottom: 0;
}
.left::before, .right::before, .prev::before, .next::before {
  content: "";
  border: 4px solid transparent;
  border-left: 0;
  border-right-color: #555;
}
.right::before, .next::before {
  border-right: 0;
  border-left: 4px solid #555;
}
.thumb {
  background: #fff;
  border: 1px solid #ababab;
}
.vscroll .thumb {
  width: 15px;
  height: 32px;
}
.gridwrap .vscroll {
  padding-top: 2px;
  background: #e6e6e6;
}
.gridwrap .thumb {
  height: 17px;
}
.hscroll {
  display: flex;
  height: 15px;
  background: #d9d9d9;
}
.hscroll .right {
  margin-left: auto;
}
.sheetbar {
  flex: none;
  height: 28px;
  display: flex;
  align-items: center;
  background: #e6e6e6;
}
.sheetbar .prev {
  margin-left: 26px;
  opacity: .3;
}
.sheetbar .next {
  margin-left: 25px;
  opacity: .3;
}
.sheettab {
  align-self: flex-start;
  width: 73px;
  height: 25px;
  margin-left: 41px;
  padding-top: 5px;
  border-bottom: 2px solid #217346;
  background: #fff;
  color: #217346;
  font: 13px/16px "DejaVu Sans", sans-serif;
  text-align: center;
}
.addsheet {
  margin-left: 33px;
}
.sheetbar .dots {
  margin: 0 17px 0 auto;
}
.sheetbar .hscroll {
  width: 262px;
  margin-right: 20px;
}

/* format pane */
.pane {
  position: relative;
  flex: none;
  width: 286px;
  padding: 16px 14px 0;
  border-left: 1px solid #b0b0b0;
}
.panehead {
  display: flex;
  align-items: center;
  height: 24px;
  padding-right: 2px;
}
.panehead h2 {
  margin-right: auto;
  font-size: 20px;
  line-height: 24px;
  color: #185c37;
}
.panehead button {
  width: 16px;
  margin-left: 25px;
}
.panetabs {
  display: flex;
  gap: 15px;
  height: 24px;
  margin-top: 7px;
  padding-left: 4px;
}
.panetabs .active {
  gap: 7px;
  color: #222;
  font-weight: bold;
}
.paneicons {
  display: flex;
  gap: 10px;
  height: 45px;
  margin-top: 7px;
  padding-left: 2px;
  border-bottom: 1px solid #c0c0c0;
}
.paneicons button {
  width: 30px;
  height: 30px;
}
.paneicons .active {
  background: #b0b0b0;
}
.panebody {
  display: flex;
  justify-content: space-between;
  height: 142px;
  margin-top: 6px;
}
.fields {
  flex: 1;
  overflow: hidden;
  padding-left: 22px;
}
.fields h3 {
  position: relative;
  font-weight: bold;
  color: #217346;
}
.fields h3::before {
  content: "";
  position: absolute;
  left: -15px;
  top: 4px;
  border-left: 7px solid transparent;
  border-bottom: 7px solid #444;
}
.fields p {
  margin: 7px 0 4px;
}
.field {
  display: flex;
  align-items: center;
  padding-left: 10px;
  margin-bottom: 7px;
}
.field label {
  flex: none;
  width: 66px;
}
.field input {
  flex: none;
  width: 93px;
  height: 23px;
  padding: 0 6px 2px;
  border: 1px solid #ababab;
  background: #fff;
}
.field button {
  flex: none;
  width: 60px;
  height: 24px;
  margin-left: 10px;
  padding-left: 6px;
  justify-content: flex-start;
  border: 1px solid #ababab;
  background: #fdfdfd;
}
.pane > .hscroll {
  margin: 2px 18px 0 1px;
}
.hscroll .thumb {
  width: 194px;
}
.marks {
  position: absolute;
  left: 0;
  top: 25px;
  z-index: 2;
}

/* status bar */
.status {
  flex: none;
  height: 23px;
  display: flex;
  align-items: center;
  padding: 0 20px 0 8px;
  border-top: 1px solid #c6c6c6;
  border-bottom: 1px solid #b8b8b8;
  background: #f3f2f1;
}
.status span {
  margin-right: auto;
}
.view {
  width: 40px;
  height: 21px;
}
.view.active {
  background: #cdcdcd;
}
.zoombtn {
  width: 18px;
  font-size: 15px;
}
.status input {
  appearance: none;
  width: 100px;
  height: 12px;
  background: linear-gradient(#999, #999) no-repeat center / 100% 1px;
}
.status input::-webkit-slider-thumb {
  appearance: none;
  width: 5px;
  height: 11px;
  background: #555;
}
.status output {
  margin-left: 10px;
}

/* context menu and mini toolbar */
.contextmenu, .minibar {
  position: absolute;
  left: 522px;
  background: #fdfdfd;
  border: 1px solid #c6c6c6;
  border-radius: 4px;
  box-shadow: 2px 3px 6px rgba(0, 0, 0, .2);
  color: #222;
}
.contextmenu {
  top: 175px;
  width: 218px;
  padding: 1px 0;
}
.contextmenu button {
  width: 100%;
  height: 28px;
  justify-content: flex-start;
}
.contextmenu button:disabled {
  color: #b0b0b0;
}
.contextmenu .hot {
  background: #d2d0ce;
}
.contextmenu i {
  display: flex;
  justify-content: center;
  width: 16px;
  margin: 0 9px 0 13px;
}
.contextmenu hr {
  height: 1px;
  margin: 1px 0 1px 33px;
  border: 0;
  background: #dadada;
}
.mark {
  position: absolute;
  left: 23px;
  bottom: -7px;
}
.minibar {
  top: 455px;
  width: 195px;
  height: 66px;
  display: flex;
  padding: 6px 3px 0 9px;
}
.minibar select {
  width: 103px;
  margin-top: 14px;
}
.minibtn {
  display: block;
  align-self: flex-start;
  width: 42px;
  margin-right: 3px;
  line-height: 14px;
  text-align: left;
  font-size: 11px;
}
.minibtn:nth-child(2) {
  width: 33px;
  margin-right: 0;
}
.minibtn em {
  display: block;
  padding-top: 7px;
  font-size: 12px;
  font-style: normal;
}
.minibtn span {
  display: flex;
  align-items: center;
  gap: 4px;
  margin-bottom: 1px;
}
```
